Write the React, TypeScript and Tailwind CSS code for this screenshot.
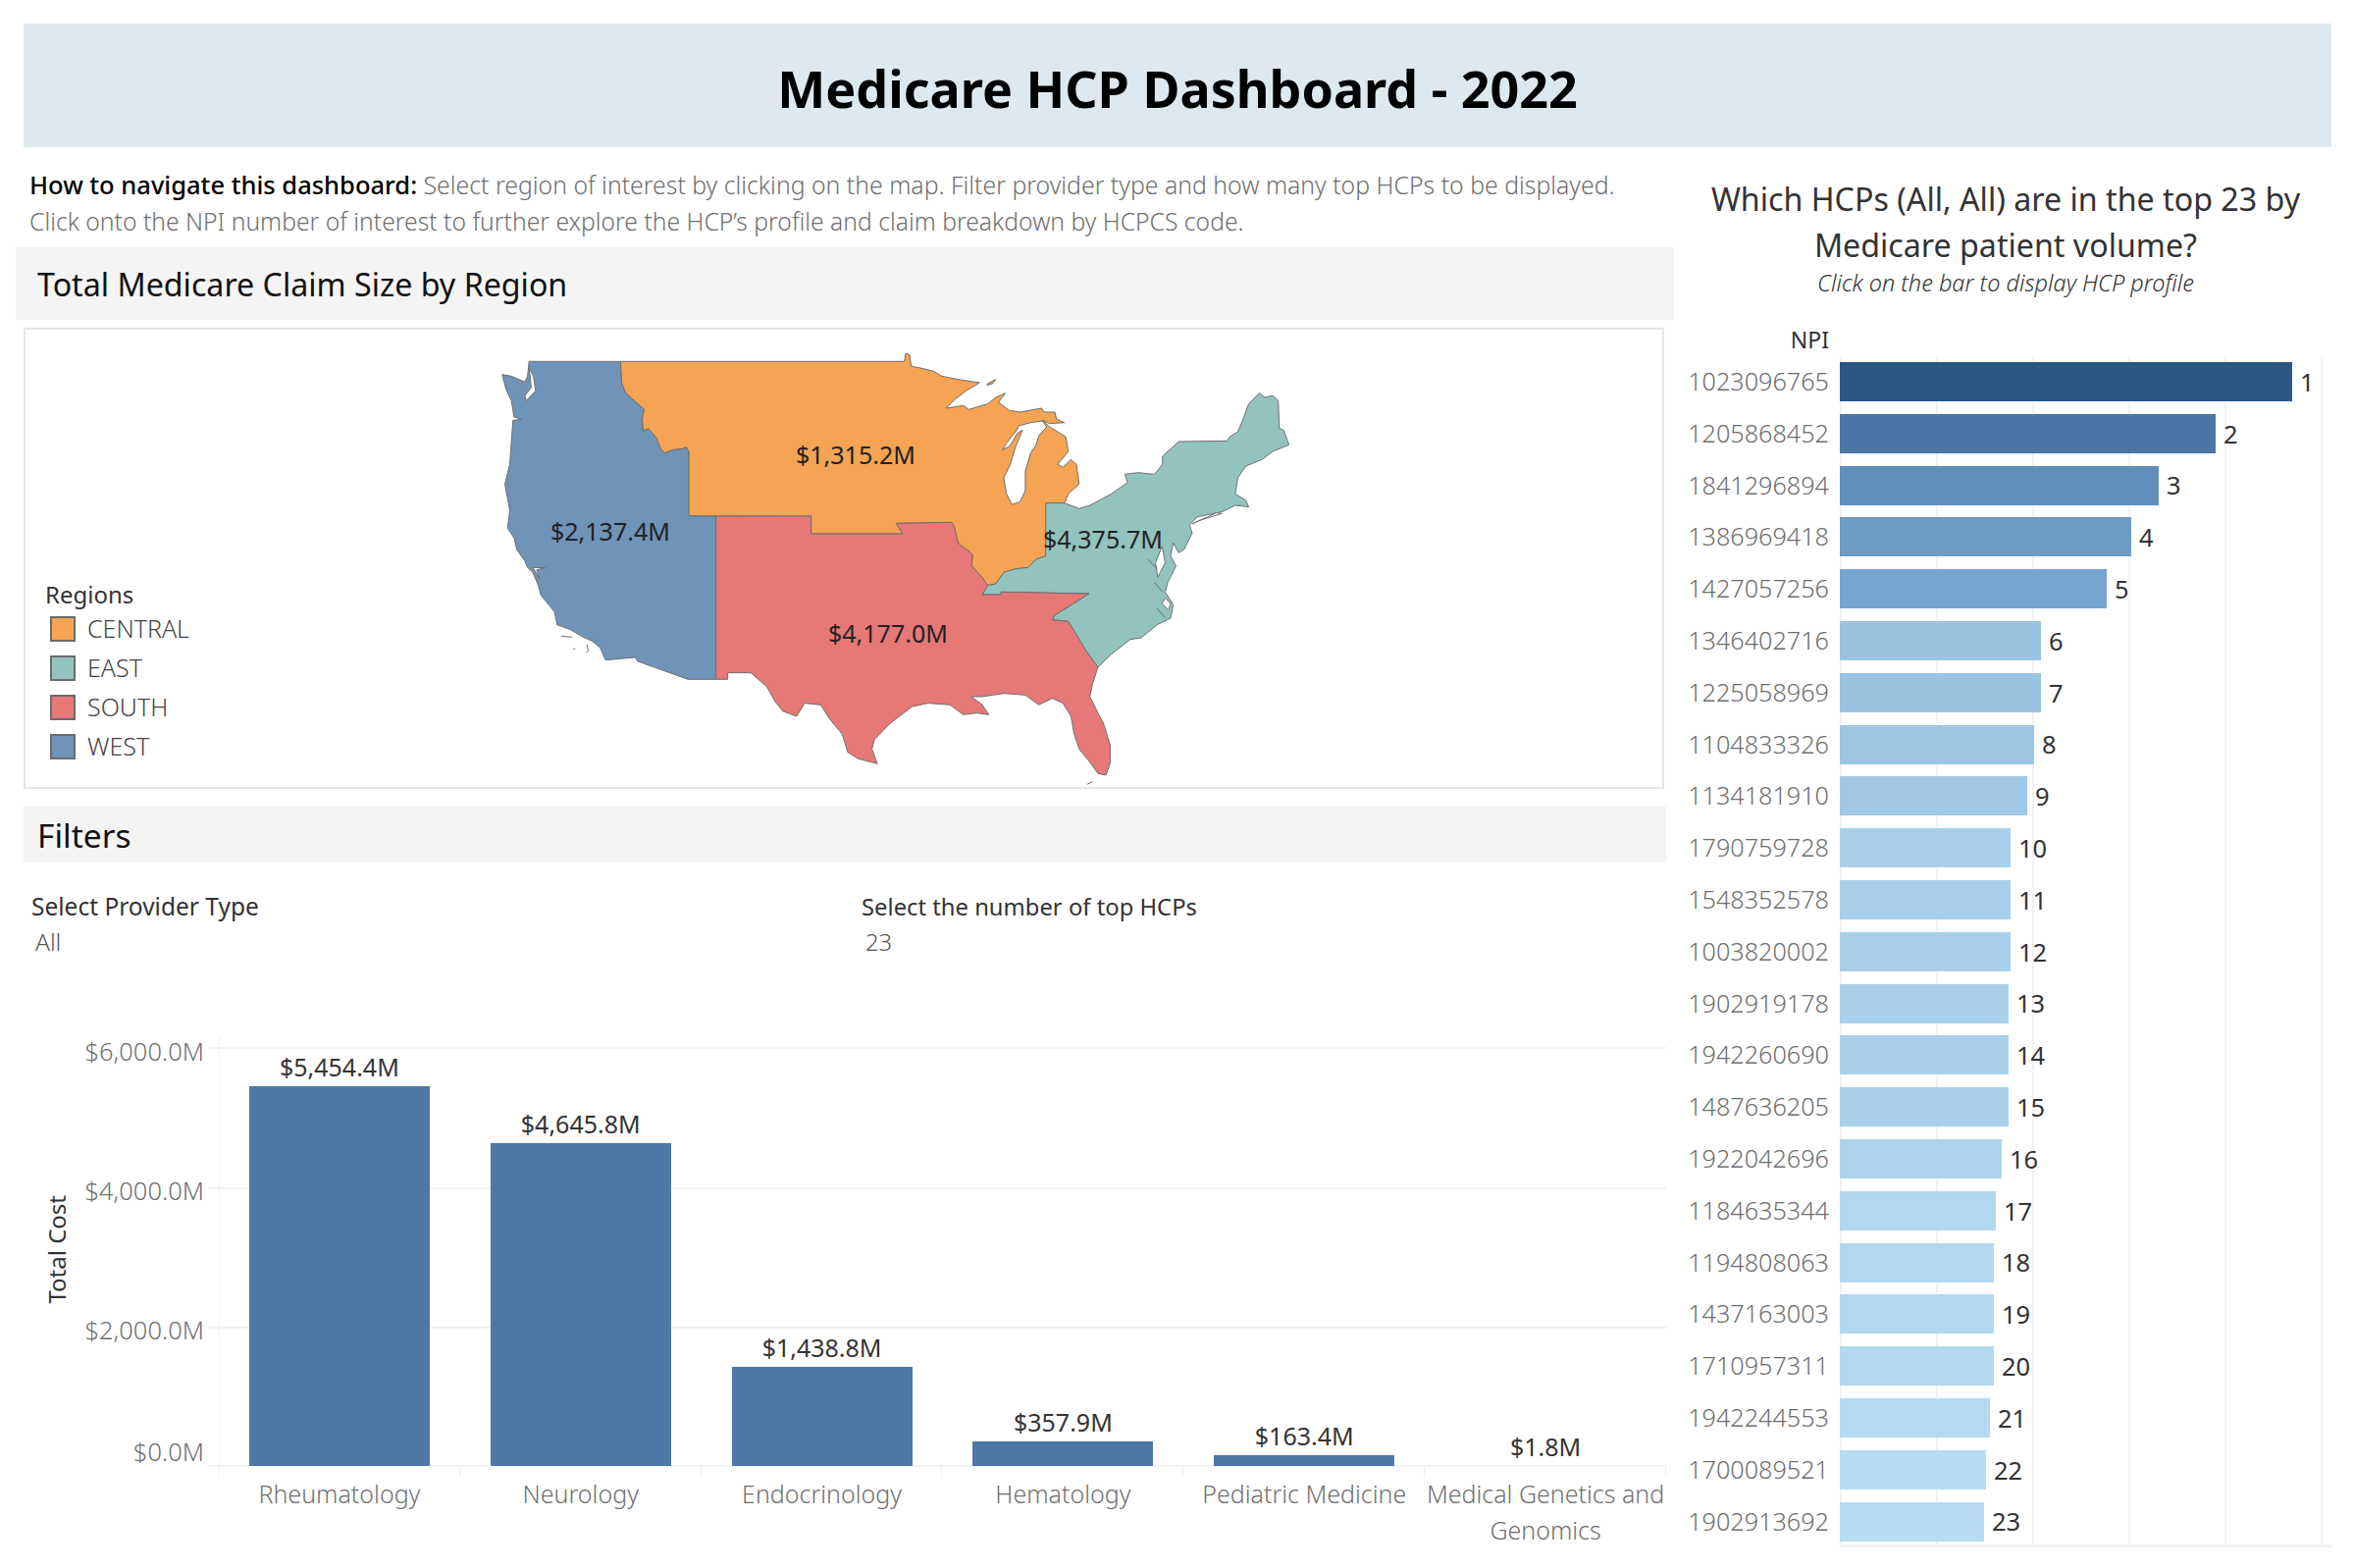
const hcps = [
  { npi: '1023096765', end: 2336, color: '#2c5784' },
  { npi: '1205868452', end: 2258, color: '#4a76a6' },
  { npi: '1841296894', end: 2200, color: '#5f8eba' },
  { npi: '1386969418', end: 2172, color: '#6c9bc4' },
  { npi: '1427057256', end: 2147, color: '#74a5cf' },
  { npi: '1346402716', end: 2080, color: '#9ac3e2' },
  { npi: '1225058969', end: 2080, color: '#9ac3e2' },
  { npi: '1104833326', end: 2073, color: '#9dc6e4' },
  { npi: '1134181910', end: 2066, color: '#a0c8e5' },
  { npi: '1790759728', end: 2049, color: '#a8d0ea' },
  { npi: '1548352578', end: 2049, color: '#a8d0ea' },
  { npi: '1003820002', end: 2049, color: '#a8d0ea' },
  { npi: '1902919178', end: 2047, color: '#a9d1eb' },
  { npi: '1942260690', end: 2047, color: '#a9d1eb' },
  { npi: '1487636205', end: 2047, color: '#a9d1eb' },
  { npi: '1922042696', end: 2040, color: '#add4ec' },
  { npi: '1184635344', end: 2034, color: '#b2d7ee' },
  { npi: '1194808063', end: 2032, color: '#b3d8ee' },
  { npi: '1437163003', end: 2032, color: '#b3d8ee' },
  { npi: '1710957311', end: 2032, color: '#b3d8ee' },
  { npi: '1942244553', end: 2028, color: '#b5d9ef' },
  { npi: '1700089521', end: 2024, color: '#b8dcf0' },
  { npi: '1902913692', end: 2022, color: '#b8dcf0' },
];

const specialties = [
  { name: 'Rheumatology', value: '$5,454.4M', height: 387 },
  { name: 'Neurology', value: '$4,645.8M', height: 329 },
  { name: 'Endocrinology', value: '$1,438.8M', height: 101 },
  { name: 'Hematology', value: '$357.9M', height: 25 },
  { name: 'Pediatric Medicine', value: '$163.4M', height: 11 },
  { name: 'Medical Genetics and Genomics', value: '$1.8M', height: 0 },
];

const regions = [
  { name: 'CENTRAL', cls: 'bg-[#f5a454]' },
  { name: 'EAST', cls: 'bg-[#92c4bd]' },
  { name: 'SOUTH', cls: 'bg-[#e67878]' },
  { name: 'WEST', cls: 'bg-[#7093b8]' },
];

function UsMap() {
  return (
    <svg viewBox="0 0 1568 1392" preserveAspectRatio="none" className="block w-[860px] h-[464px] overflow-visible">
      <g stroke="#6f6f6f" strokeWidth="1">
        <path
          vectorEffect="non-scaling-stroke"
          fill="#7093b8"
          d="M108 85L278 85L280 150L287 180L300 200L322 232L318 260L320 297L330 290L345 320L352 350L360 365L375 355L393 352L400 347L405 360L405 557L455 558L455 1057L403 1057L310 1002L305 990L250 998L240 960L225 940L205 925L185 905L160 890L155 850L130 800L125 770L115 730L105 715L100 695L85 660L80 625L68 595L72 540L63 460L72 400L78 265L95 262L80 255L75 205L65 170L58 125L75 130L100 148L105 130Z"
        />
        <path
          vectorEffect="non-scaling-stroke"
          fill="#f5a454"
          d="M278 85L805 85L808 60L815 65L818 100L835 105L860 115L875 130L905 140L945 150L920 175L900 200L883 228L915 220L925 232L960 215L975 195L993 182L980 210L1000 235L1020 240L1060 228L1065 240L1085 240L1088 262L1103 272L1075 275L1062 265L1075 285L1105 315L1110 360L1090 400L1100 408L1115 385L1125 400L1130 460L1110 490L1103 518L1068 518L1068 680L1050 690L1035 715L1010 720L990 730L975 765L960 770L950 745L930 710L932 675L905 640L898 590L893 577L790 580L802 612L632 612L632 558L405 557L405 360L400 347L393 352L375 355L360 365L352 350L345 320L330 290L320 297L318 260L322 232L300 200L287 180L280 150Z"
        />
        <path
          vectorEffect="non-scaling-stroke"
          fill="#92c4bd"
          d="M1068 518L1103 518L1130 535L1150 525L1190 490L1220 455L1215 430L1240 425L1270 430L1285 400L1285 375L1315 330L1405 328L1410 315L1425 300L1435 260L1445 215L1465 182L1475 195L1490 190L1500 205L1502 290L1510 295L1520 340L1490 360L1470 385L1440 405L1425 440L1420 490L1440 510L1445 530L1420 525L1395 545L1350 560L1335 585L1340 610L1325 660L1315 670L1305 640L1300 680L1310 710L1295 760L1290 790L1305 830L1300 870L1275 890L1245 930L1225 935L1190 980L1165 1020L1145 975L1110 880L1080 875L1085 860L1120 825L1148 795L985 790L985 798L950 798L960 770L975 765L990 730L1010 720L1035 715L1050 690L1068 680Z"
        />
        <path
          vectorEffect="non-scaling-stroke"
          fill="#e67878"
          d="M455 558L632 558L632 612L802 612L790 580L893 577L898 590L905 640L932 675L930 710L950 745L960 770L950 798L985 798L985 790L1148 795L1120 825L1085 860L1080 875L1110 880L1145 975L1165 1020L1155 1070L1150 1110L1165 1160L1175 1190L1188 1260L1188 1310L1180 1350L1165 1345L1150 1310L1130 1270L1120 1220L1115 1170L1100 1130L1080 1115L1055 1135L1030 1105L990 1100L950 1110L930 1110L950 1135L962 1165L940 1160L915 1165L890 1135L850 1130L820 1140L780 1190L750 1240L745 1270L755 1315L720 1300L700 1280L690 1225L665 1175L650 1135L620 1130L605 1170L580 1155L565 1125L550 1080L520 1037L477 1037L477 1057L455 1057Z"
        />
        {/* lake michigan, then the thin inlets along the coasts */}
        <path
          vectorEffect="non-scaling-stroke"
          fill="#ffffff"
          d="M1062 267L1040 272L1018 282L1012 300L995 335L988 356L1002 342L1015 305L1025 295L1012 345L1002 400L990 440L995 490L1005 522L1020 515L1030 480L1030 420L1040 365L1050 340L1056 310L1070 285Z"
        />
        <path vectorEffect="non-scaling-stroke" fill="#ffffff" d="M108 105L116 130L120 175L103 205L100 190L112 165L110 135Z" />
        <path vectorEffect="non-scaling-stroke" fill="#ffffff" d="M115 715L138 716L122 722L128 750Z" />
        <path vectorEffect="non-scaling-stroke" fill="#ffffff" d="M1340 582L1385 548L1395 550L1352 572Z" />
        <path vectorEffect="non-scaling-stroke" fill="#ffffff" d="M1284 650L1290 700L1276 745L1272 700Z" />
        <path vectorEffect="non-scaling-stroke" fill="#ffffff" d="M1290 808L1300 825L1296 845L1284 825Z" />
        <path vectorEffect="non-scaling-stroke" fill="#f5a454" d="M958 155L975 140L970 152L960 158Z" />
        <path vectorEffect="non-scaling-stroke" fill="none" d="M168 925L188 928M190 963L194 965M215 950L218 970L214 975M1145 1378L1155 1370M1258 690L1275 720M1270 760L1285 790M1275 840L1290 870" />
      </g>
    </svg>
  );
}

export default function App() {
  return (
    <div className="w-[2398px] h-[1598px] bg-white overflow-hidden pt-[24px] font-['Noto_Sans',sans-serif]">
      <div className="mx-[24px] w-[2352px] h-[126px] bg-[#dde9ef] flex items-center justify-center">
        <h1 className="text-[52px] font-bold text-black leading-none pt-[5px]">Medicare HCP Dashboard - 2022</h1>
      </div>

      <div className="flex">
        {/* left column */}
        <div className="w-[1706px] pl-[16px]">
          <div className="pt-[20px] pl-[14px] h-[102px] text-[24.8px] leading-[37px] text-[#6f6f6f] font-light">
            <p className="whitespace-nowrap">
              <span className="font-medium text-black text-[25.5px]">How to navigate this dashboard:</span> Select region of interest by clicking on the map. Filter provider type and how many top HCPs to be displayed.
            </p>
            <p className="whitespace-nowrap text-[24.7px]">Click onto the NPI number of interest to further explore the HCP’s profile and claim breakdown by HCPCS code.</p>
          </div>

          <div className="h-[74px] bg-[#f4f4f4] flex items-center pl-[22px] pt-[2px] text-[32.2px] text-[#111111]">
            Total Medicare Claim Size by Region
          </div>

          <div className="relative mt-[8px] ml-[8px] w-[1672px] h-[470px] border-2 border-[#e6e6e6] flex">
            <div className="w-[454px] pl-[21px] flex flex-col justify-end pb-[28px]">
              <div className="text-[24px] leading-[34px] text-[#333333] mb-[5px] -ml-[1px]">Regions</div>
              <div className="flex flex-col gap-[14px] pl-[4px]">
                {regions.map((r) => (
                  <div key={r.name} className="flex items-center h-[26px] gap-[12px]">
                    <span className={`w-[26px] h-[26px] border-2 border-[#6b6b6b] ${r.cls}`} />
                    <span className="text-[25px] font-light text-[#444444]">{r.name}</span>
                  </div>
                ))}
              </div>
            </div>
            <div className="mt-[4px]">
              <UsMap />
            </div>
            <span className="absolute left-[785px] top-[111px] text-[25px] leading-[32px] text-[#222222]">$1,315.2M</span>
            <span className="absolute left-[535px] top-[189px] text-[25px] leading-[32px] text-[#222222]">$2,137.4M</span>
            <span className="absolute left-[1037px] top-[197px] text-[25px] leading-[32px] text-[#222222]">$4,375.7M</span>
            <span className="absolute left-[818px] top-[293px] text-[25px] leading-[32px] text-[#222222]">$4,177.0M</span>
          </div>

          <div className="mt-[18px] ml-[8px] w-[1674px] h-[57px] bg-[#f4f4f4] flex items-center pl-[14px] pt-[2px] text-[33.5px] text-[#111111]">
            Filters
          </div>

          <div className="mt-[27px] ml-[16px] flex h-[100px] leading-[36px]">
            <div className="w-[846px] text-[24.5px]">
              <div className="text-[#333333]">Select Provider Type</div>
              <div className="pl-[4px] text-[#555555] font-light">All</div>
            </div>
            <div className="text-[23.8px]">
              <div className="text-[#333333]">Select the number of top HCPs</div>
              <div className="pl-[4px] text-[#555555] font-light">23</div>
            </div>
          </div>

          {/* cost by specialty */}
          <div className="flex h-[520px] mt-[49px]">
            <div className="w-[192px] flex shrink-0">
              <div className="w-[84px] h-[436px] flex items-center justify-center shrink-0">
                <span className="[writing-mode:vertical-rl] rotate-180 text-[24px] text-[#333333]">Total Cost</span>
              </div>
              <div className="flex-1 min-w-0 -mt-[1px] flex flex-col items-end text-[25.5px] leading-[34px] font-light text-[#707070] whitespace-nowrap">
                <div>$6,000.0M</div>
                <div className="mt-[108px]">$4,000.0M</div>
                <div className="mt-[108px]">$2,000.0M</div>
                <div className="mt-[90px]">$0.0M</div>
              </div>
            </div>
            <div className="relative ml-[15px] w-[1475px]">
              <div className="absolute left-[-10px] right-0 top-[12px] h-[2px] bg-[#f2f2f2]" />
              <div className="absolute left-[-10px] right-0 top-[155px] h-[2px] bg-[#f2f2f2]" />
              <div className="absolute left-[-10px] right-0 top-[297px] h-[2px] bg-[#f2f2f2]" />
              <div className="absolute left-[-10px] right-0 top-[438px] h-[2px] bg-[#f2f2f2]" />
              <div className="absolute left-0 top-0 h-[451px] w-[1px] bg-[#f2f2f2]" />
              <div className="relative h-[439px] flex items-end">
                {specialties.map((s) => (
                  <div key={s.name} className="w-[246px] flex flex-col items-center">
                    <div className="text-[25px] leading-[34px] text-[#333333] mb-[3px]">{s.value}</div>
                    <div className="w-[184px] bg-[#4e78a6]" style={{ height: s.height }} />
                  </div>
                ))}
              </div>
              <div className="flex">
                {specialties.map((s) => (
                  <div key={s.name} className="relative w-[246px] h-[80px] pt-[10px] text-center text-[25px] leading-[37px] font-light text-[#707070]">
                    <span className="absolute right-0 top-0 h-[12px] w-[1px] bg-[#eeeeee]" />
                    {s.name}
                  </div>
                ))}
              </div>
            </div>
          </div>
        </div>

        {/* right column */}
        <div className="w-[692px]">
          <div className="w-[676px] pt-[29px] text-center">
            <div className="text-[32.2px] leading-[47px] text-[#333333] whitespace-nowrap">Which HCPs (All, All) are in the top 23 by</div>
            <div className="text-[32.2px] leading-[47px] text-[#333333]">Medicare patient volume?</div>
            <div className="text-[23.5px] leading-[30px] italic font-light text-[#333333]">Click on the bar to display HCP profile</div>
          </div>
          <div className="w-[158px] h-[36px] mt-[25px] text-right text-[23px] leading-[36px] text-[#333333]">NPI</div>
          <div className="relative">
            <div className="absolute left-[169px] top-[-1px] w-[502px] h-[1214px] border-b-[3px] border-[#f2f2f2]" />
            {[0, 98, 196, 294, 392, 490].map((x) => (
              <div key={x} className="absolute top-[-1px] h-[1214px] w-[2px] bg-[#f2f2f2]" style={{ left: 169 + x }} />
            ))}
            <div className="relative pt-[5px] flex flex-col gap-[12.8px]">
              {hcps.map((h, i) => (
                <div key={h.npi} className="flex items-center h-[40px]">
                  <div className="w-[158px] text-right text-[25.2px] font-light text-[#6e6e6e]">{h.npi}</div>
                  <div className="ml-[11px] h-[40px]" style={{ width: h.end - 1875, backgroundColor: h.color }} />
                  <div className="ml-[8px] text-[25.5px] text-[#333333]">{i + 1}</div>
                </div>
              ))}
            </div>
          </div>
        </div>
      </div>
    </div>
  );
}
